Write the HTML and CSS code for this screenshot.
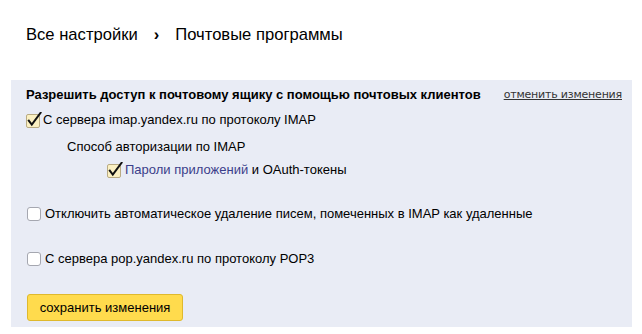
FILE: index.html
```html
<!DOCTYPE html>
<html lang="ru">
<head>
  <meta charset="UTF-8" />
  <meta name="viewport" content="width=device-width, initial-scale=1" />
  <title>Почтовые программы</title>
  <link rel="stylesheet" href="styles.css">
</head>
<body>
  <div class="crumbs">
    <span>Все настройки</span>
    <span class="crumb-sep">›</span>
    <span>Почтовые программы</span>
  </div>

  <div class="panel">
    <div class="panel-head">
      <span class="panel-title">Разрешить доступ к почтовому ящику с помощью почтовых клиентов</span>
      <a class="undo-link" href="#">отменить изменения</a>
    </div>

    <label class="row row-imap">
      <!-- галочка -->
      <svg class="box box-on" viewBox="0 0 16 16" xmlns="http://www.w3.org/2000/svg">
        <rect x="0.5" y="2.5" width="13" height="13" rx="1.5" />
        <path d="M2.8 8.6l3 3.9L14.6 0.8" />
      </svg>
      С сервера imap.yandex.ru по протоколу IMAP
    </label>

    <div class="row row-sub">Способ авторизации по IMAP</div>

    <label class="row row-auth">
      <svg class="box box-on" viewBox="0 0 16 16" xmlns="http://www.w3.org/2000/svg">
        <rect x="0.5" y="2.5" width="13" height="13" rx="1.5" />
        <path d="M2.8 8.6l3 3.9L14.6 0.8" />
      </svg>
      <span><a class="app-link" href="#">Пароли приложений</a> и OAuth-токены</span>
    </label>

    <label class="row row-gap">
      <span class="box box-off"></span>
      Отключить автоматическое удаление писем, помеченных в IMAP как удаленные
    </label>

    <label class="row row-gap">
      <span class="box box-off"></span>
      С сервера pop.yandex.ru по протоколу POP3
    </label>

    <button class="save-btn">сохранить изменения</button>
  </div>
</body>
</html>
```

FILE: styles.css
```css
body {
  margin: 0;
  font-family: "Liberation Sans", Arial, sans-serif;
  color: #000;
  background: #fff;
}

.crumbs {
  padding: 25px 0 0 26px;
  height: 55px;
  box-sizing: border-box;
  font-size: 16.6px;
  line-height: 20px;
  display: flex;
  gap: 16px;
}

.crumb-sep {
  font-weight: bold;
}

.panel {
  margin-left: 11px;
  width: 621px;
  height: 247px;
  box-sizing: border-box;
  margin-top: 25px;
  padding: 7px 10px 0 15px;
  background-color: #e9ecf5;
  font-size: 13px;
  line-height: 16px;
}

.panel-head {
  display: flex;
  justify-content: space-between;
  align-items: center;
}

.panel-title {
  font-weight: bold;
}

.undo-link {
  font-family: "DejaVu Sans", Verdana, sans-serif;
  font-size: 11px;
  letter-spacing: -0.2px;
  color: #333;
  text-decoration: underline;
}

.row {
  display: flex;
  align-items: center;
  height: 16px;
}

.row-imap {
  margin-top: 9px;
}

.row-sub {
  margin-top: 11px;
  padding-left: 41px;
}

.row-auth {
  margin-top: 7px;
  padding-left: 81px;
}

.row-auth .box {
  margin-right: 2px;
}

.row-gap {
  margin-top: 28px;
}

.row-gap + .row-gap {
  margin-top: 29px;
}

.box {
  width: 16px;
  height: 16px;
  margin-right: 1px;
  flex: none;
}

.box-on rect {
  fill: #fbf0c2;
  stroke: #b9ab83;
}

.box-on path {
  fill: none;
  stroke: #111;
  stroke-width: 2;
  stroke-linecap: square;
}

.box-off {
  width: 12px;
  height: 12px;
  margin: 0 4px 0 1px;
  background: #fff;
  border: 1px solid #a5a7b0;
  border-radius: 3px;
}

.app-link {
  color: #3b3e8a;
  text-decoration: none;
}

.save-btn {
  margin-top: 27px;
  margin-left: 1px;
  width: 156px;
  height: 27px;
  padding: 0;
  font-family: "Liberation Sans", Arial, sans-serif;
  font-size: 13px;
  color: #000;
  background-color: #ffdb4d;
  border: 1px solid #dfb92d;
  border-radius: 3px;
  cursor: pointer;
}
```
